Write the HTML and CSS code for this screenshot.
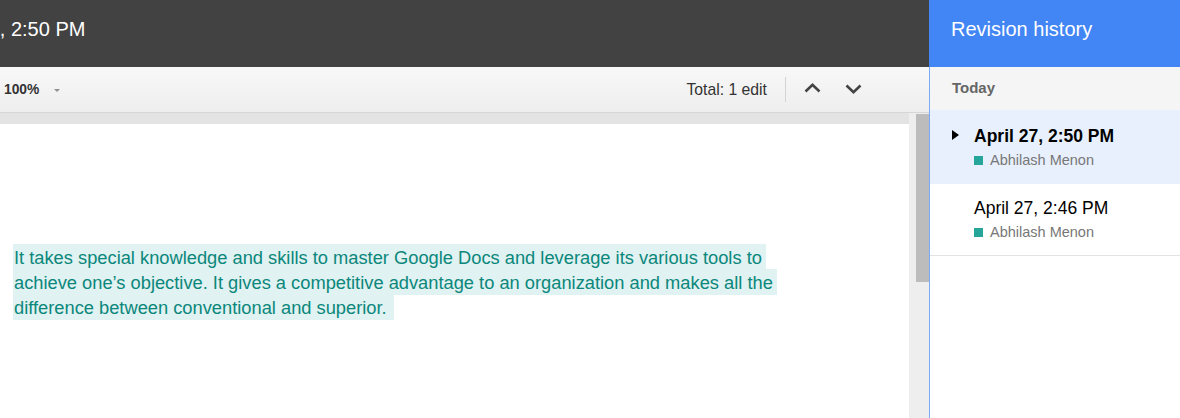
FILE: index.html
```html
<!DOCTYPE html>
<html lang="en">
<head>
<meta charset="utf-8">
<title>Revision history</title>
<link rel="stylesheet" href="styles.css">
</head>
<body>
<div class="app">
  <div class="main">
    <header class="topbar"><span class="title">April 27, 2:50 PM</span></header>
    <div class="toolbar">
      <span class="zoom">100%</span>
      <span class="caret-down"></span>
      <span class="spacer"></span>
      <span class="total">Total: 1 edit</span>
      <span class="sep"></span>
      <svg class="chev up" width="17" height="10" viewBox="0 0 17 10"><polyline points="1.5,8.5 8.5,1.8 15.5,8.5" fill="none" stroke="#444" stroke-width="2.6"/></svg>
      <svg class="chev down" width="17" height="10" viewBox="0 0 17 10"><polyline points="1.5,1.5 8.5,8.2 15.5,1.5" fill="none" stroke="#444" stroke-width="2.6"/></svg>
    </div>
    <div class="docarea">
      <div class="pagecol">
        <div class="page">
          <p class="para"><span class="hl">It takes special knowledge and skills to master Google Docs and leverage its various tools to</span><br><span class="hl">achieve one’s objective. It gives a competitive advantage to an organization and makes all the</span><br><span class="hl last">difference between conventional and superior.</span></p>
        </div>
      </div>
      <div class="scroll"><div class="thumb"></div></div>
    </div>
  </div>
  <aside class="panel">
    <div class="panel-head">Revision history</div>
    <div class="panel-body">
      <div class="day">Today</div>
      <div class="entry selected">
        <div class="mark"><span class="tri"></span></div>
        <div class="info">
          <div class="when">April 27, 2:50 PM</div>
          <div class="who"><span class="sq"></span>Abhilash Menon</div>
        </div>
      </div>
      <div class="entry">
        <div class="mark"></div>
        <div class="info">
          <div class="when">April 27, 2:46 PM</div>
          <div class="who"><span class="sq"></span>Abhilash Menon</div>
        </div>
      </div>
    </div>
  </aside>
</div>
</body>
</html>
```
FILE: styles.css
```css
* { box-sizing: border-box; }
html, body { margin: 0; padding: 0; }
body {
  width: 1180px;
  height: 418px;
  overflow: hidden;
  font-family: "Liberation Sans", Arial, sans-serif;
  background: #fff;
}
.app { display: flex; height: 418px; }
.main { width: 929px; display: flex; flex-direction: column; }

.topbar {
  height: 67px;
  background: #424242;
  overflow: hidden;
  white-space: nowrap;
  padding-top: 17px;
}
.title {
  display: inline-block;
  margin-left: -68px;
  color: #fff;
  font-size: 20px;
  line-height: 24px;
}

.toolbar {
  height: 46px;
  background: linear-gradient(#f8f8f8, #eeeeee);
  border-bottom: 1px solid #d6d6d6;
  display: flex;
  align-items: center;
  padding-left: 4px;
  padding-right: 67px;
}
.zoom { font-size: 13.8px; font-weight: bold; color: #333; }
.caret-down {
  width: 0; height: 0;
  border-left: 3px solid transparent;
  border-right: 3px solid transparent;
  border-top: 3px solid #909090;
  margin-left: 15px;
  margin-top: 2px;
}
.spacer { flex: 1; }
.total { font-size: 15.75px; color: #333; }
.sep { width: 1px; height: 25px; background: #d4d4d4; margin: 0 18px; }
.chev { display: block; }
.chev.up { margin-top: -4px; }
.chev.down { margin-left: 24px; margin-top: -1px; }

.docarea { flex: 1; display: flex; background: #ebebeb; }
.pagecol {
  width: 909px;
  padding-top: 11px;
  background: linear-gradient(#e3e3e3, #ececec);
  display: flex;
}
.page { flex: 1; background: #fff; padding: 120px 0 0 13px; }
.para {
  margin: 0;
  font-size: 18.3px;
  line-height: 25px;
  color: #0b877c;
}
.hl {
  background: #e0f2f1;
  padding: 2.5px 4px 2.5px 1px;
}
.hl.last { padding-right: 7px; }
.scroll { width: 20px; background: #eeeeee; padding: 1px 0 0 7px; }
.thumb { width: 13px; height: 168px; background: #bcbcbc; }

.panel { flex: 1; display: flex; flex-direction: column; }
.panel-head {
  height: 67px;
  background: #4285f4;
  color: #fff;
  font-size: 20px;
  line-height: 24px;
  padding: 17px 0 0 22px;
}
.panel-body { flex: 1; border-left: 1px solid #7aa9f7; background: #fff; }
.day {
  height: 43px;
  background: #f5f5f5;
  padding: 12px 0 0 22px;
  font-size: 15px;
  line-height: 18px;
  font-weight: bold;
  color: #666;
}
.entry {
  display: flex;
  padding: 14px 0 14px 22px;
  border-bottom: 1px solid #e3e3e3;
}
.entry.selected {
  background: #e8f0fe;
  padding: 16px 0 15px 22px;
  border-bottom: 0;
}
.mark { width: 22px; padding-top: 4px; }
.tri {
  display: block;
  width: 0; height: 0;
  border-left: 7px solid #000;
  border-top: 5.5px solid transparent;
  border-bottom: 5.5px solid transparent;
}
.when { font-size: 17.5px; line-height: 20px; color: #000; }
.selected .when { font-weight: bold; }
.who {
  margin-top: 6px;
  display: flex;
  align-items: center;
  font-size: 14.5px;
  line-height: 17px;
  color: #777;
}
.sq { width: 9px; height: 9px; background: #26a69a; margin-right: 7px; }
```
